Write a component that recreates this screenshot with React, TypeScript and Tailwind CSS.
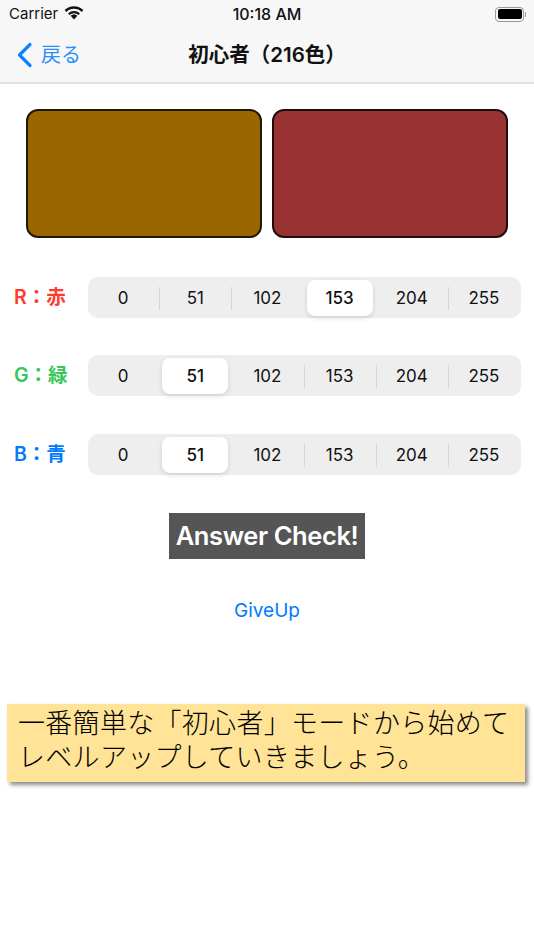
import React from 'react'

const values = [0, 51, 102, 153, 204, 255]

const rows = [
  { label: 'R：赤', color: 'text-[#ff3b30]', selected: 3, mb: 'mb-[37px]' },
  { label: 'G：緑', color: 'text-[#34c759]', selected: 1, mb: 'mb-[38px]' },
  { label: 'B：青', color: 'text-[#007aff]', selected: 1, mb: 'mb-[38px]' },
]

function Segmented({ selected }: { selected: number }) {
  return (
    <div className="flex h-[41px] w-[433px] items-center rounded-[10px] bg-[#eeeeef] pr-[1px]">
      {values.map((v, i) => (
        <div key={v} className="relative flex h-[36px] flex-1 items-center justify-center first:ml-[-1px]">
          {i === selected && (
            <div className="absolute inset-y-0 left-[3px] right-[3px] rounded-[8px] bg-white shadow-[0_2px_5px_rgba(0,0,0,0.13)]" />
          )}
          {i > 0 && i !== selected && i !== selected + 1 && (
            <div className="absolute left-0 top-[7px] h-[23px] w-px bg-[#d6d6d8]" />
          )}
          <span className={`relative text-[17px] leading-[36px] text-[#111] ${i === selected ? 'font-medium' : ''}`}>{v}</span>
        </div>
      ))}
    </div>
  )
}

export default function App() {
  return (
    <div className="h-[950px] w-[534px] overflow-hidden bg-white font-['Inter','Noto_Sans_CJK_JP',sans-serif]">
      <div className="h-[84px] border-b-2 border-[#e2e2e3] bg-[#f7f7f7]">
        {/* status bar */}
        <div className="relative flex h-[28px] items-center px-[9px] text-[#111]">
          <span className="text-[15px]">Carrier</span>
          <svg className="ml-[6px] mb-[3px]" width="20" height="15" viewBox="0 0 20 15">
            <path d="M10 14.5 L6.6 10.8 A5 5 0 0 1 13.4 10.8 Z" fill="#111" />
            <path d="M4 8.4 A8.6 8.6 0 0 1 16 8.4 L14.5 10 A6.4 6.4 0 0 0 5.5 10 Z" fill="#111" />
            <path d="M0.6 5 A13.4 13.4 0 0 1 19.4 5 L17.6 6.9 A10.8 10.8 0 0 0 2.4 6.9 Z" fill="#111" />
          </svg>
          <span className="absolute left-0 right-0 text-center text-[16px] font-medium">10:18 AM</span>
          <div className="ml-auto mr-[-1px] flex items-center">
            <div className="h-[15px] w-[29px] rounded-[4px] border border-[#9a9a9a] p-[1.5px]">
              <div className="h-full w-full rounded-[2px] bg-black" />
            </div>
            <div className="ml-px h-[5px] w-px rounded-r bg-[#9a9a9a]" />
          </div>
        </div>
        {/* nav bar */}
        <div className="relative flex h-[54px] items-center pl-[16px]">
          <svg width="17" height="26" viewBox="0 0 17 26" fill="none">
            <path d="M14 2.5 L3.5 13 L14 23.5" stroke="#0a84ff" strokeWidth="3.2" strokeLinecap="round" strokeLinejoin="round" />
          </svg>
          <span className="ml-[8px] text-[20px] text-[#2b8ffb]">戻る</span>
          <span className="absolute left-0 right-0 text-center text-[20.5px] font-semibold text-[#111]">初心者（216色）</span>
        </div>
      </div>

      {/* color swatches */}
      <div className="mt-[25px] flex gap-[10px] pl-[26px]">
        <div className="h-[129px] w-[236px] rounded-[12px] border-2 border-[#221800] bg-[#996600]" />
        <div className="h-[129px] w-[236px] rounded-[12px] border-2 border-[#220c0c] bg-[#993333]" />
      </div>

      {/* rgb pickers */}
      <div className="mt-[39px]">
        {rows.map((r) => (
          <div key={r.label} className={`flex items-center pl-[14px] ${r.mb}`}>
            <div className={`w-[74px] text-[19.5px] font-semibold ${r.color}`}>{r.label}</div>
            <Segmented selected={r.selected} />
          </div>
        ))}
      </div>

      <div className="flex justify-center">
        <button className="h-[46px] w-[196px] bg-[#555555] text-center text-[25.5px] font-semibold tracking-[-0.4px] text-white">
          Answer Check!
        </button>
      </div>

      <div className="mt-[40px] text-center text-[19px] leading-[24px] text-[#007aff]">GiveUp</div>

      {/* hint */}
      <div className="ml-[7px] mt-[81px] h-[78px] w-[518px] bg-[#ffe396] pl-[11px] pt-[3px] text-[27px] font-light leading-[34px] tracking-[0.3px] text-black shadow-[3px_3px_4px_rgba(0,0,0,0.45)]">
        一番簡単な「初心者」モードから始めて
        <br />
        レベルアップしていきましょう。
      </div>
    </div>
  )
}
